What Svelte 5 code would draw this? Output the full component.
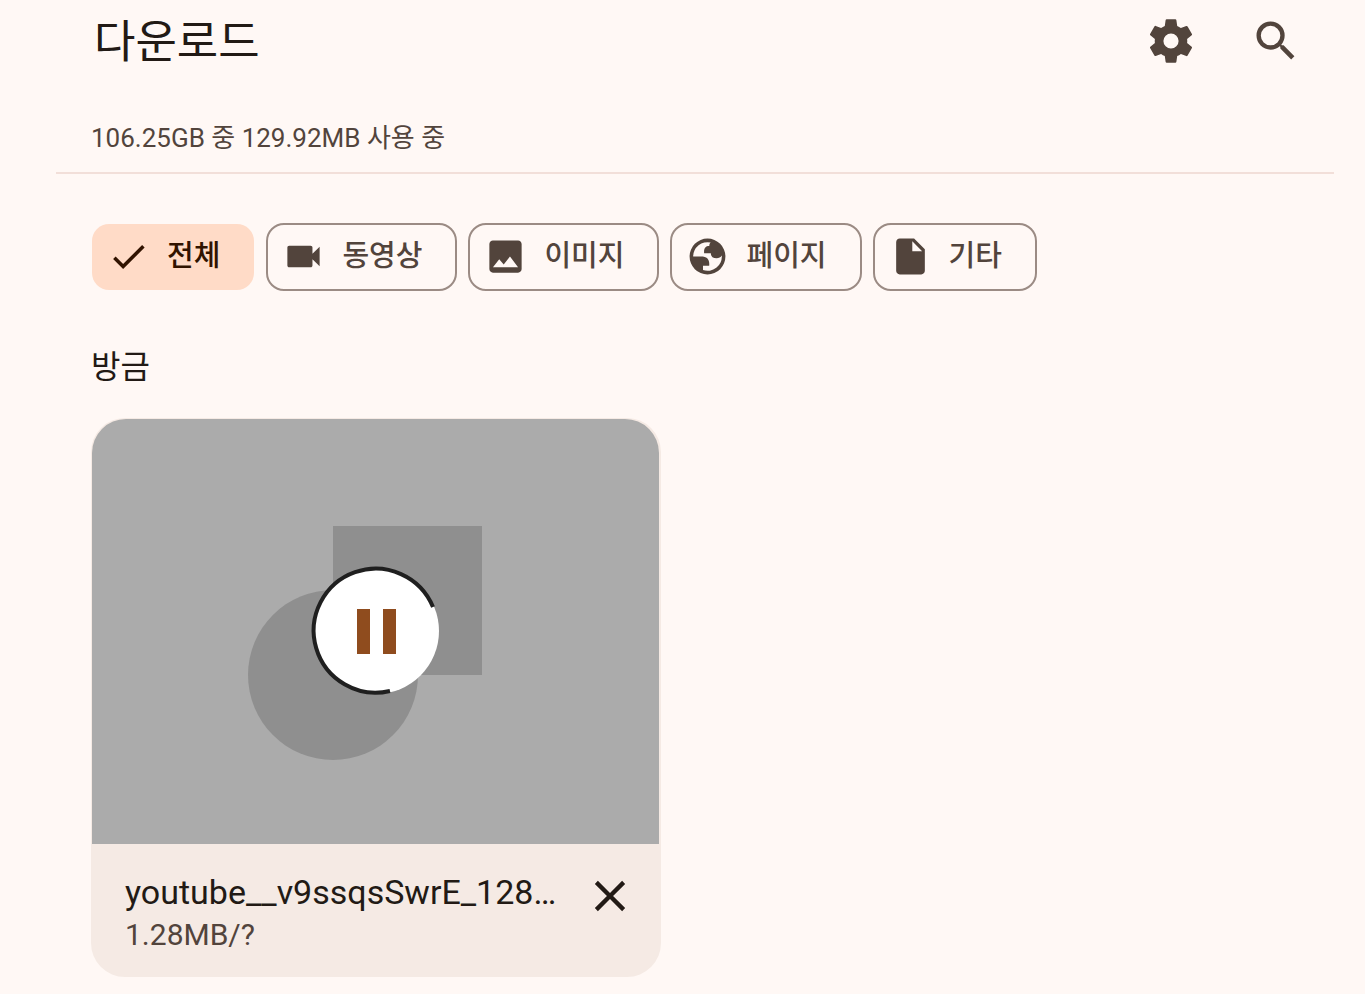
<script lang="ts">
  let filters = [
    { id: 'all', label: '전체', icon: 'M9 16.17 4.83 12l-1.42 1.41L9 19 21 7l-1.41-1.41z' },
    { id: 'video', label: '동영상', icon: 'M17 10.5V7c0-.55-.45-1-1-1H4c-.55 0-1 .45-1 1v10c0 .55.45 1 1 1h12c.55 0 1-.45 1-1v-3.5l4 4v-11z' },
    { id: 'image', label: '이미지', icon: 'M21 19V5c0-1.1-.9-2-2-2H5c-1.1 0-2 .9-2 2v14c0 1.1.9 2 2 2h14c1.1 0 2-.9 2-2zM8.5 13.5l2.5 3.01L14.5 12l4.5 6H5z' },
    { id: 'page', label: '페이지', icon: 'M12 2a10 10 0 1 0 0 20 10 10 0 0 0 0-20zM4 12h4.4c3.4 0 4.92 1.73 4.54 5.13H9.49v2.47A8 8 0 0 0 19.99 11.51c-.66 1-1.63 1.49-2.91 1.49-2.14 0-3.21-.92-3.21-2.75h-3.75c-.27-2.73.68-4.09 2.87-4.09 0-.98.33-1.6.81-1.97A8 8 0 0 0 4 12z' },
    { id: 'other', label: '기타', icon: 'M6 2c-1.1 0-2 .9-2 2v16c0 1.1.9 2 2 2h12c1.1 0 2-.9 2-2V8l-6-6zm7 7V3.5L18.5 9z' },
  ];
  let selected = 'all';
</script>

<main>
  <header>
    <h1>다운로드</h1>
    <div class="actions">
      <button aria-label="설정">
        <svg viewBox="0 0 24 24"><path d="M19.43 12.98c.04-.32.07-.64.07-.98s-.03-.66-.07-.98l2.11-1.65c.19-.15.24-.42.12-.64l-2-3.46c-.12-.22-.39-.3-.61-.22l-2.49 1c-.52-.4-1.08-.73-1.69-.98l-.38-2.65C14.46 2.18 14.25 2 14 2h-4c-.25 0-.46.18-.49.42l-.38 2.65c-.61.25-1.17.59-1.69.98l-2.49-1c-.23-.09-.49 0-.61.22l-2 3.46c-.13.22-.07.49.12.64l2.11 1.65c-.04.32-.07.65-.07.98s.03.66.07.98l-2.11 1.65c-.19.15-.24.42-.12.64l2 3.46c.12.22.39.3.61.22l2.49-1c.52.4 1.08.73 1.69.98l.38 2.65c.03.24.24.42.49.42h4c.25 0 .46-.18.49-.42l.38-2.65c.61-.25 1.17-.59 1.69-.98l2.49 1c.23.09.49 0 .61-.22l2-3.46c.12-.22.07-.49-.12-.64zM12 15.5a3.5 3.5 0 1 1 0-7 3.5 3.5 0 0 1 0 7z" /></svg>
      </button>
      <button aria-label="검색">
        <svg viewBox="0 0 24 24"><path d="M15.5 14h-.79l-.28-.27A6.471 6.471 0 0 0 16 9.5 6.5 6.5 0 1 0 9.5 16c1.61 0 3.09-.59 4.23-1.57l.27.28v.79l5 4.99L20.49 19zm-6 0a4.5 4.5 0 1 1 0-9 4.5 4.5 0 0 1 0 9z" /></svg>
      </button>
    </div>
  </header>

  <p class="storage">106.25GB 중 129.92MB 사용 중</p>

  <div class="filters">
    {#each filters as f}
      <button class="chip" class:selected={selected === f.id} aria-pressed={selected === f.id} on:click={() => selected = f.id}>
        <svg viewBox="0 0 24 24"><path fill-rule="evenodd" d={f.icon} /></svg>
        <span>{f.label}</span>
      </button>
    {/each}
  </div>

  <section>
    <h2>방금</h2>
    <article class="card">
      <div class="preview">
        <svg class="shapes" viewBox="0 -23 256 258" aria-hidden="true">
          <rect x="85" width="149" height="149" />
          <circle cx="85" cy="149" r="85" />
        </svg>
        <button class="pause" aria-label="일시중지">
          <svg viewBox="0 0 128 128">
            <circle cx="64" cy="63" r="63" fill="#fff" />
            <path d="M121 39A62 62 0 1 0 78 123" fill="none" stroke="#1f1f1f" stroke-width="4" />
            <path d="M45 41h13v45H45zM71 41h13v45H71z" fill="#8f4c1e" />
          </svg>
        </button>
      </div>
      <div class="info">
        <div class="text">
          <h3>youtube__v9ssqsSwrE_128…</h3>
          <p>1.28MB/?</p>
        </div>
        <button class="cancel" aria-label="취소">
          <svg viewBox="0 0 24 24"><path d="M19 6.41 17.59 5 12 10.59 6.41 5 5 6.41 10.59 12 5 17.59 6.41 19 12 13.41 17.59 19 19 17.59 13.41 12z" /></svg>
        </button>
      </div>
    </article>
  </section>
</main>

<style>
  :global(body) {
    background: #fff8f5;
  }
  main {
    font-family: Roboto, 'Noto Sans CJK KR', sans-serif;
    color: #221a15;
    padding-bottom: 16px;
  }
  h1, h2, h3, p {
    margin: 0;
    font-weight: 400;
  }
  button {
    border: none;
    background: none;
    padding: 0;
    font: inherit;
    color: #52443c;
    cursor: pointer;
  }
  svg {
    display: block;
    fill: currentColor;
  }
  header {
    display: flex;
    justify-content: space-between;
    align-items: center;
    height: 82px;
    padding: 0 63px 0 94px;
  }
  h1 {
    padding-top: 4px;
    font-size: 45px;
    line-height: 64px;
  }
  .actions {
    display: flex;
    gap: 53px;
  }
  .actions svg {
    width: 52px;
    height: 52px;
  }
  .storage {
    margin: 0 31px 0 56px;
    padding: 38px 35px 16px;
    border-bottom: 2px solid #f2dfd9;
    font-size: 26px;
    line-height: 36px;
    color: #52443c;
  }
  .filters {
    display: flex;
    flex-wrap: wrap;
    gap: 11px;
    padding: 49px 31px 0 91px;
  }
  .chip {
    display: flex;
    align-items: center;
    gap: 17px;
    height: 68px;
    padding: 0 33px 2px 14px;
    border: 2px solid #9b8b84;
    border-radius: 18px;
    font-size: 29px;
    font-weight: 500;
  }
  .chip svg {
    width: 43px;
    height: 43px;
  }
  .chip span {
    line-height: 40px;
  }
  .chip.selected {
    border-color: transparent;
    border-width: 1px;
    padding: 0 34px 2px 15px;
    background: #ffdbc7 padding-box;
    color: #311300;
  }
  section {
    padding: 52px 31px 0 91px;
  }
  h2 {
    font-size: 32px;
    line-height: 48px;
  }
  .card {
    max-width: 570px;
    margin-top: 27px;
    padding-top: 1px;
    border-radius: 34px;
    background: #f5eae4;
    overflow: hidden;
  }
  .preview {
    position: relative;
    display: flex;
    align-items: center;
    justify-content: center;
    aspect-ratio: 4 / 3;
    margin: 0 2px 0 1px;
    border-radius: 34px 34px 0 0;
    background: #ababab;
  }
  .shapes {
    width: 256px;
    height: 258px;
    color: #8f8f8f;
  }
  .pause {
    position: absolute;
    inset: 0;
    margin: auto;
    width: 128px;
    height: 128px;
  }
  .pause svg {
    overflow: visible;
  }
  .info {
    display: flex;
    align-items: flex-start;
    gap: 28px;
    padding: 26px 25px 21px 34px;
  }
  .text {
    flex: 1;
    min-width: 0;
  }
  h3 {
    white-space: nowrap;
    font-size: 34px;
    line-height: 44px;
  }
  .text p {
    font-size: 30px;
    line-height: 42px;
    color: #52443c;
  }
  .cancel {
    color: #221a15;
  }
  .cancel svg {
    width: 52px;
    height: 52px;
  }
</style>
